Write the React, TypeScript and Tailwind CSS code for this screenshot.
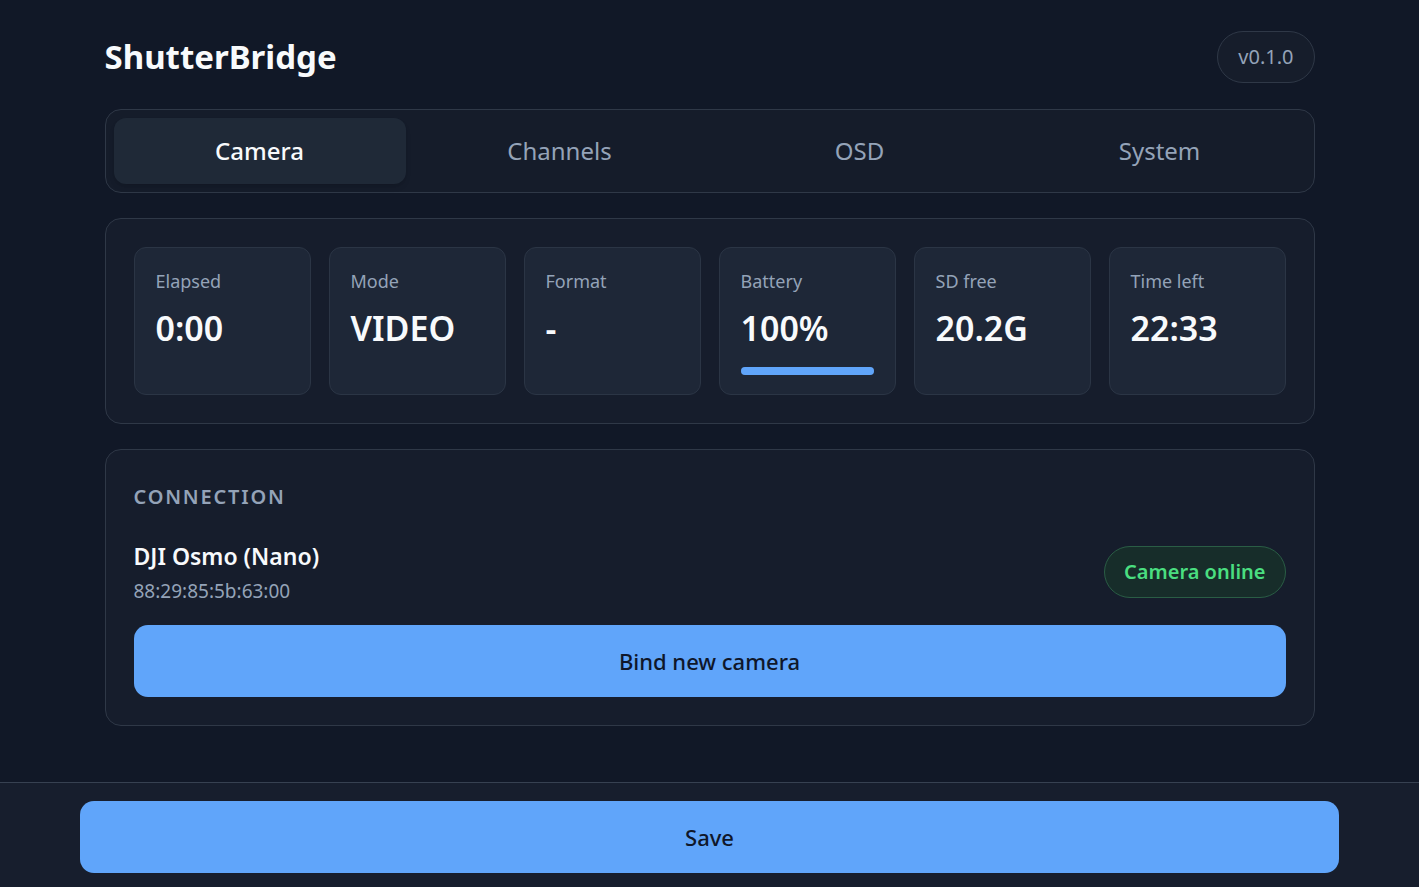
import React from 'react';

type Stat = {
  label: string;
  value: string;
  progress?: number;
};

const stats: Stat[] = [
  { label: 'Elapsed', value: '0:00' },
  { label: 'Mode', value: 'VIDEO' },
  { label: 'Format', value: '-' },
  { label: 'Battery', value: '100%', progress: 100 },
  { label: 'SD free', value: '20.2G' },
  { label: 'Time left', value: '22:33' },
];

const tabs = ['Camera', 'Channels', 'OSD', 'System'];

const StatCard = ({ stat }: { stat: Stat }) => (
  <div className="flex flex-col rounded-xl border border-[#2b3545] bg-[#1e2737] px-[21px] pt-[21px] pb-[19px]">
    <div className="text-[18px] leading-6 text-[#94a3b8]">{stat.label}</div>
    <div className="mt-[15px] text-[34px] font-semibold leading-10 text-[#f8fafc]">{stat.value}</div>
    {stat.progress !== undefined && (
      <div className="mt-[19px] h-2 w-full rounded-full bg-[#334155]">
        <div className="h-2 rounded-full bg-[#60a5fa]" style={{ width: `${stat.progress}%` }} />
      </div>
    )}
  </div>
);

const App = () => {
  const activeTab = 'Camera';

  return (
    <div
      className="flex min-h-screen flex-col bg-[#111827] text-white"
      style={{ fontFamily: '"Noto Sans", "Open Sans", sans-serif' }}
    >
      <main className="mx-auto w-full max-w-[1210px] flex-1">
        {/* Header */}
        <header className="flex items-center justify-between pt-[30px] pb-[25px]">
          <h1 className="text-[33px] font-bold leading-[54px] text-[#f8fafc]">ShutterBridge</h1>
          <span className="flex h-[52px] items-center rounded-full border border-[#2f3847] bg-[#161d2b] px-[20px] text-[20px] text-[#94a3b8]">
            v0.1.0
          </span>
        </header>

        {/* Tabs */}
        <nav className="grid grid-cols-4 gap-2 rounded-2xl border border-[#2f3847] bg-[#151c2a] p-2">
          {tabs.map((tab) => (
            <button
              key={tab}
              className={
                tab === activeTab
                  ? 'h-[66px] rounded-xl bg-[#1f2937] text-[24px] font-medium text-[#f8fafc] shadow-md'
                  : 'h-[66px] rounded-xl text-[24px] text-[#94a3b8]'
              }
            >
              {tab}
            </button>
          ))}
        </nav>

        {/* Status */}
        <section className="mt-[25px] rounded-2xl border border-[#2f3847] bg-[#161d2c] p-[28px]">
          <div className="grid grid-cols-6 gap-[18px]">
            {stats.map((s) => (
              <StatCard key={s.label} stat={s} />
            ))}
          </div>
        </section>

        {/* Connection */}
        <section className="mt-[25px] rounded-2xl border border-[#2f3847] bg-[#161d2c] px-[28px] pt-[33px] pb-[28px]">
          <h2 className="text-[20px] font-semibold uppercase leading-7 tracking-[0.09em] text-[#94a3b8]">
            Connection
          </h2>
          <div className="mt-[29px] flex items-center justify-between">
            <div>
              <div className="text-[23px] font-semibold leading-8 text-[#f8fafc]">DJI Osmo (Nano)</div>
              <div className="mt-[7px] text-[19px] leading-6 text-[#94a3b8]">88:29:85:5b:63:00</div>
            </div>
            <span className="flex h-[52px] items-center rounded-full border border-[#2a5d45] bg-[#172d2a] px-[19px] text-[20px] font-semibold text-[#4ade80]">
              Camera online
            </span>
          </div>
          <button className="mt-[22px] h-[72px] w-full rounded-[14px] bg-[#60a5fa] text-[22px] font-medium text-[#0f172a]">
            Bind new camera
          </button>
        </section>
      </main>

      {/* Footer */}
      <footer className="mt-[56px] border-t border-[#374151] bg-[#171e2d] px-[80px] pt-[18px] pb-[14px]">
        <button className="h-[72px] w-full rounded-[14px] bg-[#60a5fa] text-[22px] font-medium text-[#0f172a]">
          Save
        </button>
      </footer>
    </div>
  );
};

export default App;
